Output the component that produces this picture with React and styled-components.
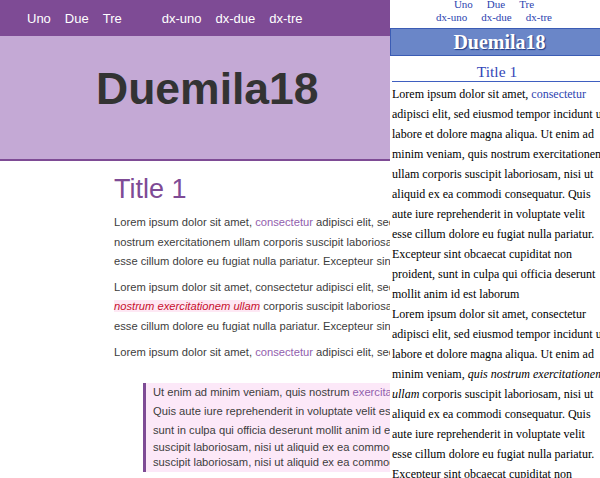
import React from "react";
import styled, { createGlobalStyle } from "styled-components";

const GlobalStyle = createGlobalStyle`
  html, body {
    margin: 0;
    padding: 0;
    background: #fff;
  }
  #root {
    position: relative;
    width: 600px;
    height: 478px;
    overflow: hidden;
  }
`;

const purple = "#7e4b95";

/* ---------- wide page (left) ---------- */

const Page = styled.div`
  width: 100%;
  height: 100%;
  font-family: "Liberation Sans", Arial, sans-serif;
  background: #fff;
`;

const TopNav = styled.nav`
  height: 36px;
  display: flex;
  align-items: center;
  padding-left: 20px;
  background: ${purple};
`;

const NavList = styled.ul`
  display: flex;
  margin: 0;
  padding: 0;
  list-style: none;

  & + & {
    margin-left: 26px;
  }
`;

const NavLink = styled.a`
  padding: 0 7px;
  font-size: 13px;
  color: #fff;
  text-decoration: none;
`;

const Hero = styled.header`
  box-sizing: border-box;
  height: 125px;
  padding: 31px 0 0 96px;
  background: #c4a9d5;
  border-bottom: 2px solid ${purple};
`;

const HeroTitle = styled.h1`
  margin: 0;
  font-size: 44.5px;
  line-height: 1;
  font-weight: bold;
  color: #333;
`;

const Content = styled.main`
  width: 900px;
  padding: 15px 0 0 114px;
  color: #3d3d3d;
  font-size: 11.2px;
`;

const Title = styled.h2`
  margin: 0 0 10px;
  font-size: 27px;
  line-height: 1;
  font-weight: normal;
  color: ${purple};
`;

const Paragraph = styled.p`
  margin: 0 0 6px;
  line-height: 19.6px;
  white-space: nowrap;
`;

const Link = styled.a`
  color: #9160ae;
  text-decoration: none;
`;

const Highlight = styled.em`
  color: #c8102e;
  background: #fee8f4;
`;

const Quote = styled.blockquote`
  margin: 21px 0 0 29px;
  padding: 0 0 2px 7px;
  border-left: 3px solid ${purple};
  background: #fce8f8;
  white-space: nowrap;
`;

const QuoteText = styled.p`
  margin: 0;
  line-height: 18.8px;
`;

const QuoteTail = styled.footer`
  line-height: 15px;
`;

/* ---------- narrow view (right overlay) ---------- */

const Aside = styled.aside`
  position: absolute;
  top: -2px;
  left: 390px;
  width: 218px;
  bottom: 0;
  background: #fff;
  font-family: "Liberation Serif", "Times New Roman", serif;
  color: #000;
`;

const MiniNav = styled.nav`
  padding-right: 10px;
  margin-bottom: 4px;
`;

const MiniList = styled.ul`
  display: flex;
  justify-content: center;
  margin: 0;
  padding: 0;
  list-style: none;
  font-size: 11px;
  line-height: 13px;
`;

const MiniLink = styled.a`
  padding: 0 7px;
  color: #2d44b0;
  text-decoration: none;
`;

const Banner = styled.div`
  box-sizing: border-box;
  height: 28px;
  border: 1px solid #3b5cb4;
  border-right: none;
  background: #6a86c8;
  color: #fff;
  font-size: 20px;
  font-weight: bold;
  line-height: 26px;
  text-align: center;
  text-shadow: 1px 1px 1px #1f3c86;
`;

const MiniTitle = styled.h2`
  margin: 7px 0 2px 2px;
  padding-right: 6px;
  border-bottom: 1px solid #3f5fc0;
  font-size: 15.5px;
  font-weight: normal;
  text-align: center;
  color: #3346b8;
`;

const MiniParagraph = styled.p`
  margin: 0;
  padding: 0 2px;
  font-size: 12px;
  line-height: 20px;
`;

const MiniLinkInline = styled.a`
  color: #2d44b0;
  text-decoration: none;
`;

const navItems = ["Uno", "Due", "Tre"];
const dxItems = ["dx-uno", "dx-due", "dx-tre"];

export default function App() {
  return (
    <>
      <GlobalStyle />
      <Page>
        <TopNav>
          <NavList>
            {navItems.map((item) => (
              <li key={item}>
                <NavLink href="#">{item}</NavLink>
              </li>
            ))}
          </NavList>
          <NavList>
            {dxItems.map((item) => (
              <li key={item}>
                <NavLink href="#">{item}</NavLink>
              </li>
            ))}
          </NavList>
        </TopNav>
        <Hero>
          <HeroTitle>Duemila18</HeroTitle>
        </Hero>
        <Content>
          <Title>Title 1</Title>
          <Paragraph>
            Lorem ipsum dolor sit amet, <Link href="#">consectetur</Link> adipisci elit, sed
            eiusmod tempor incidunt ut labore et dolore magna aliqua. Ut enim ad minim veniam, quis
            <br />
            nostrum exercitationem ullam corporis suscipit laboriosam, nisi ut aliquid ex ea commodi
            consequatur. Quis aute iure reprehenderit in voluptate velit
            <br />
            esse cillum dolore eu fugiat nulla pariatur. Excepteur sint obcaecat cupiditat non
            proident, sunt in culpa qui officia deserunt mollit anim id est laborum
          </Paragraph>
          <Paragraph>
            Lorem ipsum dolor sit amet, consectetur adipisci elit, sed eiusmod tempor incidunt ut
            labore et dolore magna aliqua. Ut enim ad minim veniam, <Highlight>quis</Highlight>
            <br />
            <Highlight>nostrum exercitationem ullam</Highlight> corporis suscipit laboriosam, nisi
            ut aliquid ex ea commodi consequatur. Quis aute iure reprehenderit in voluptate velit
            <br />
            esse cillum dolore eu fugiat nulla pariatur. Excepteur sint obcaecat cupiditat non
            proident, sunt in culpa qui officia deserunt mollit anim id est laborum
          </Paragraph>
          <Paragraph>
            Lorem ipsum dolor sit amet, <Link href="#">consectetur</Link> adipisci elit, sed
            eiusmod tempor incidunt ut labore et dolore magna aliqua.
          </Paragraph>
          <Quote>
            <QuoteText>
              Ut enim ad minim veniam, quis nostrum <Link href="#">exercitationem</Link> ullam
              corporis suscipit laboriosam
              <br />
              Quis aute iure reprehenderit in voluptate velit esse cillum dolore eu fugiat nulla
              <br />
              sunt in culpa qui officia deserunt mollit anim id est laborum
            </QuoteText>
            <QuoteTail>
              suscipit laboriosam, nisi ut aliquid ex ea commodi consequatur
              <br />
              suscipit laboriosam, nisi ut aliquid ex ea commodi consequatur
            </QuoteTail>
          </Quote>
        </Content>
      </Page>

      <Aside>
        <MiniNav>
          <MiniList>
            {navItems.map((item) => (
              <li key={item}>
                <MiniLink href="#">{item}</MiniLink>
              </li>
            ))}
          </MiniList>
          <MiniList>
            {dxItems.map((item) => (
              <li key={item}>
                <MiniLink href="#">{item}</MiniLink>
              </li>
            ))}
          </MiniList>
        </MiniNav>
        <Banner>Duemila18</Banner>
        <MiniTitle>Title 1</MiniTitle>
        <MiniParagraph>
          Lorem ipsum dolor sit amet, <MiniLinkInline href="#">consectetur</MiniLinkInline>{" "}
          adipisci elit, sed eiusmod tempor incidunt ut labore et dolore magna aliqua. Ut enim ad
          minim veniam, quis nostrum exercitationem ullam corporis suscipit laboriosam, nisi ut
          aliquid ex ea commodi consequatur. Quis aute iure reprehenderit in voluptate velit esse
          cillum dolore eu fugiat nulla pariatur. Excepteur sint obcaecat cupiditat non proident,
          sunt in culpa qui officia deserunt mollit anim id est laborum
        </MiniParagraph>
        <MiniParagraph>
          Lorem ipsum dolor sit amet, consectetur adipisci elit, sed eiusmod tempor incidunt ut
          labore et dolore magna aliqua. Ut enim ad minim veniam,{" "}
          <em>quis nostrum exercitationem ullam</em> corporis suscipit laboriosam, nisi ut aliquid
          ex ea commodi consequatur. Quis aute iure reprehenderit in voluptate velit esse cillum
          dolore eu fugiat nulla pariatur. Excepteur sint obcaecat cupiditat non proident, sunt in
          culpa qui officia deserunt mollit anim id est laborum
        </MiniParagraph>
      </Aside>
    </>
  );
}
